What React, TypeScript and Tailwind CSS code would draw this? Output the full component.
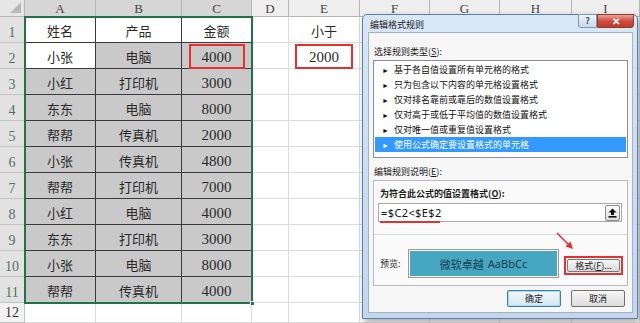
const DATA = [
  ['姓名', '产品', '金额'],
  ['小张', '电脑', '4000'],
  ['小红', '打印机', '3000'],
  ['东东', '电脑', '8000'],
  ['帮帮', '传真机', '2000'],
  ['小张', '传真机', '4800'],
  ['帮帮', '打印机', '7000'],
  ['小红', '电脑', '4000'],
  ['东东', '打印机', '3000'],
  ['小张', '电脑', '8000'],
  ['帮帮', '传真机', '4000'],
]

const LETTERS = ['A', 'B', 'C', 'D', 'E', 'F', 'G', 'H', 'I', '']

const RULES = [
  '基于各自值设置所有单元格的格式',
  '只为包含以下内容的单元格设置格式',
  '仅对排名靠前或靠后的数值设置格式',
  '仅对高于或低于平均值的数值设置格式',
  '仅对唯一值或重复值设置格式',
  '使用公式确定要设置格式的单元格',
]

function cellText(r: number, c: number) {
  if (r >= 1 && r <= 11 && c >= 1 && c <= 3) return DATA[r - 1][c - 1]
  if (c === 5 && r === 1) return '小于'
  if (c === 5 && r === 2) return '2000'
  return ''
}

function Sheet() {
  const rows = Array.from({ length: 13 }, (_, r) => r)
  return (
    <div className="grid grid-cols-[25px_71px_86px_70px_37px_71px_70px_70px_72px_1fr] grid-rows-[17px_repeat(11,26px)_20px] font-['Liberation_Serif','Noto_Sans_CJK_SC',serif] text-[#2a2a2a]">
      {rows.map((r) =>
        LETTERS.map((_, c) => {
          const key = `${r}-${c}`
          // corner
          if (r === 0 && c === 0) {
            return (
              <div key={key} className="relative bg-[#e6e6e6] border-r border-b border-[#b5b5b5]">
                <div className="absolute right-[3px] bottom-[3px] w-0 h-0 border-l-[11px] border-l-transparent border-b-[11px] border-b-[#b9b9b9]" />
              </div>
            )
          }
          // column header
          if (r === 0) {
            const sel = c >= 1 && c <= 3
            return (
              <div
                key={key}
                className={`flex items-center justify-center pt-[1px] text-[13px] text-[#444] border-r border-b border-[#b5b5b5] ${sel ? 'bg-[#d6d6d6]' : 'bg-[#eeeeee]'}`}
              >
                {LETTERS[c - 1]}
              </div>
            )
          }
          // row header
          if (c === 0) {
            const sel = r <= 11
            return (
              <div
                key={key}
                className={`flex items-end justify-center pb-[1px] text-[14px] leading-[16px] border-r border-b border-[#c4c4c4] ${sel ? 'bg-[#e2e2e2] text-[#55705f]' : 'bg-[#f2f2f2] text-[#333]'}`}
              >
                {r}
              </div>
            )
          }
          const inTable = r <= 11 && c >= 1 && c <= 3
          const text = cellText(r, c)
          const isNum = /^\d+$/.test(text)
          const white = r === 1 || (r === 2 && c === 1)
          const boxed = (r === 2 && c === 3) || (r === 2 && c === 5)
          return (
            <div
              key={key}
              className={`relative flex items-center justify-center pt-[4px] border-r border-b ${
                inTable ? `border-[#3a3a3a] ${white ? 'bg-white' : 'bg-[#c9c9c9]'}` : 'border-[#dcdcdc] bg-white'
              } ${isNum ? 'text-[15px]' : 'text-[13px]'}`}
            >
              {text}
              {boxed && (
                <div
                  className={`absolute top-[1px] bottom-[-1px] border-2 border-[#e5302e] ${c === 3 ? 'left-[7px] right-[6px]' : 'left-[6px] right-[6px]'}`}
                />
              )}
            </div>
          )
        })
      )}
    </div>
  )
}

function UploadIcon() {
  return (
    <svg width="9" height="10" viewBox="0 0 9 10">
      <path d="M4.5 0.5 L8.5 4.5 H6 V7 H3 V4.5 H0.5 Z" fill="#111" />
      <rect x="0.5" y="8" width="8" height="1.6" fill="#111" />
    </svg>
  )
}

function Dialog() {
  return (
    <div className="absolute left-[362px] top-[14px] w-[276px] h-[305px] flex flex-col rounded-t-[5px] border border-[#5b7fa8] bg-gradient-to-b from-[#d9e7f5] to-[#c3d6ec] shadow-[2px_3px_6px_rgba(0,0,0,0.35)] font-['Noto_Sans_CJK_SC',sans-serif] text-[9px] leading-[12px] text-[#1b1b1b]">
      {/* title bar */}
      <div className="relative h-[17px] shrink-0 flex items-center pl-[7px] pt-[2px] text-[#222]">
        编辑格式规则
        <div className="absolute top-[-1px] right-[40px] w-[19px] h-[14px] flex items-center justify-center rounded-bl-[3px] border border-[#7f98b5] bg-gradient-to-b from-[#eef3f9] to-[#c9d7e8] text-[9px] font-bold text-[#3d5778]">
          ?
        </div>
        <div className="absolute top-[-1px] right-[3px] w-[37px] h-[14px] flex items-center justify-center rounded-br-[3px] border border-[#8e3a30] bg-gradient-to-b from-[#e9a297] via-[#cf4a3a] to-[#c03b2b] text-[10px] font-bold text-white">
          ✕
        </div>
      </div>

      {/* client */}
      <div className="flex-1 ml-[5px] mr-[4px] mb-[5px] border border-[#9fb3cb] bg-[#f6f6f6] px-[4px] flex flex-col">
        <div className="mt-[13px] h-[12px] pl-[1px]">
          选择规则类型(<span className="underline">S</span>):
        </div>
        <div className="mt-[2px] h-[98px] border border-[#8a8f96] bg-white pt-[1px] px-[1px]">
          {RULES.map((rule, i) => {
            const sel = i === RULES.length - 1
            return (
              <div
                key={rule}
                className={`h-[15px] flex items-center gap-[5px] pl-[7px] ${sel ? 'bg-[#3399ff] text-white' : 'text-[#111]'}`}
              >
                <span className="text-[7px]">►</span>
                <span>{rule}</span>
              </div>
            )
          })}
        </div>

        <div className="mt-[8px] h-[12px] pl-[1px]">
          编辑规则说明(<span className="underline">E</span>):
        </div>
        <div className="mt-[2px] h-[106px] border border-[#b9b9b9] bg-[#fafafa] flex flex-col">
          <div className="mt-[7px] h-[12px] pl-[6px] font-bold">
            为符合此公式的值设置格式(<span className="underline">O</span>):
          </div>
          <div className="relative mt-[3px] ml-[4px] mr-[5px] h-[19px] border border-[#a9a9a9] bg-white flex items-center justify-between pl-[2px] pr-[1px]">
            <span className="font-['Noto_Sans',sans-serif] text-[11px] tracking-[0.4px] text-[#111]">=$C2&lt;$E$2</span>
            <div className="w-[15px] h-[16px] flex items-center justify-center border border-[#8a8a8a] rounded-[2px] bg-gradient-to-b from-[#fbfbfb] to-[#dedede]">
              <UploadIcon />
            </div>
            <div className="absolute left-[1px] bottom-[-2px] w-[60px] h-[2px] bg-[#e5302e]" />
          </div>
          <div className="mt-[12px] h-px bg-[#d6d6d6]" />
          <div className="mt-[14px] flex items-center pl-[6px]">
            <span className="w-[28px]">预览:</span>
            <div className="w-[151px] h-[29px] border border-[#9a9a9a] p-px bg-white">
              <div className="w-full h-full bg-[#48a7c0] flex items-center justify-center gap-[4px] text-[11px] text-[#163c52]">
                <span>微软卓越</span>
                <span className="font-['Noto_Sans',sans-serif]">AaBbCc</span>
              </div>
            </div>
            <div className="ml-[5px] mt-[4px] w-[59px] h-[19px] border-2 border-[#e5302e] p-px">
              <div className="w-full h-full border border-[#7a7a7a] rounded-[2px] bg-gradient-to-b from-[#f6f6f6] to-[#dcdcdc] flex items-center justify-center">
                格式(<span className="underline">F</span>)...
              </div>
            </div>
          </div>
        </div>

        <div className="mt-[4px] flex justify-end gap-[10px] pr-[3px]">
          <div className="w-[54px] h-[17px] border border-[#3c7fb1] rounded-[2px] bg-gradient-to-b from-[#f2f8fd] to-[#d5e6f4] shadow-[inset_0_0_0_1px_#a9d7f5] flex items-center justify-center">
            确定
          </div>
          <div className="w-[54px] h-[17px] border border-[#707070] rounded-[2px] bg-gradient-to-b from-[#f6f6f6] to-[#dddddd] flex items-center justify-center">
            取消
          </div>
        </div>
      </div>
    </div>
  )
}

export default function App() {
  return (
    <div className="relative w-[640px] h-[323px] overflow-hidden bg-white">
      <Sheet />
      {/* selection outline A1:C11 */}
      <div className="absolute left-[24px] top-[16px] w-[229px] h-[288px] border-2 border-[#217346] pointer-events-none" />
      <div className="absolute left-[250px] top-[301px] w-[5px] h-[5px] bg-[#217346] border border-white" />
      <Dialog />
      {/* annotation arrow */}
      <svg className="absolute left-[550px] top-[227px]" width="28" height="26" viewBox="0 0 28 26">
        <line x1="7" y1="6" x2="20" y2="19" stroke="#e5302e" strokeWidth="1.5" />
        <path d="M23 22 L15.5 19.5 L20.5 14.5 Z" fill="#e5302e" />
      </svg>
    </div>
  )
}
